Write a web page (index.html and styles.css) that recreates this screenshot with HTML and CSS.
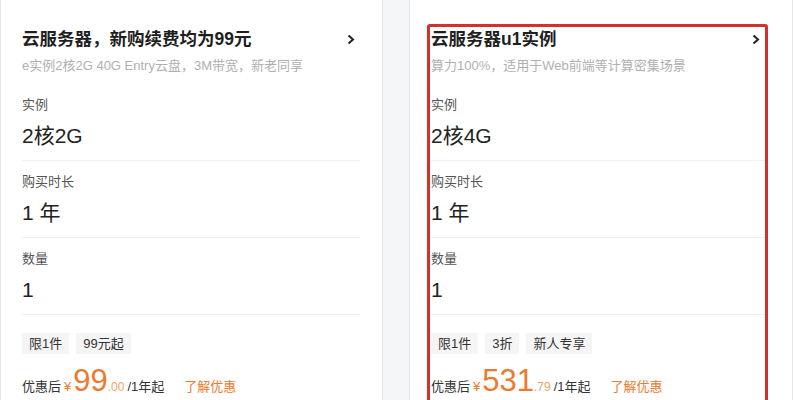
FILE: index.html
```html
<!DOCTYPE html>
<html lang="zh-CN">
<head>
    <meta charset="UTF-8">
    <meta name="viewport" content="width=device-width, initial-scale=1.0">
    <link rel="stylesheet" href="styles.css">
</head>
<body>
    <div class="cards">
        <div class="card">
            <div class="card-body">
                <div class="card-head">
                    <h2>云服务器，新购续费均为99元</h2>
                    <svg class="arrow" width="8" height="11" viewBox="0 0 8 11"><polyline points="1.5,1.5 6,5.5 1.5,9.5" fill="none" stroke="#222" stroke-width="2"/></svg>
                </div>
                <p class="desc">e实例2核2G 40G Entry云盘，3M带宽，新老同享</p>

                <div class="spec first">
                    <div class="spec-label">实例</div>
                    <div class="spec-value">2核2G</div>
                </div>
                <div class="spec">
                    <div class="spec-label">购买时长</div>
                    <div class="spec-value">1 年</div>
                </div>
                <div class="spec">
                    <div class="spec-label">数量</div>
                    <div class="spec-value">1</div>
                </div>

                <div class="tags">
                    <span class="tag">限1件</span>
                    <span class="tag">99元起</span>
                </div>
                <div class="price">
                    <span class="price-label">优惠后</span>
                    <span class="yen">¥</span><span class="num">99</span><span class="dec">.00</span>
                    <span class="unit">/1年起</span>
                    <a class="more" href="#">了解优惠</a>
                </div>
            </div>
        </div>

        <div class="card active">
            <div class="card-body">
                <div class="card-head">
                    <h2>云服务器u1实例</h2>
                    <svg class="arrow" width="8" height="11" viewBox="0 0 8 11"><polyline points="1.5,1.5 6,5.5 1.5,9.5" fill="none" stroke="#222" stroke-width="2"/></svg>
                </div>
                <p class="desc">算力100%，适用于Web前端等计算密集场景</p>

                <div class="spec first">
                    <div class="spec-label">实例</div>
                    <div class="spec-value">2核4G</div>
                </div>
                <div class="spec">
                    <div class="spec-label">购买时长</div>
                    <div class="spec-value">1 年</div>
                </div>
                <div class="spec">
                    <div class="spec-label">数量</div>
                    <div class="spec-value">1</div>
                </div>

                <div class="tags">
                    <span class="tag">限1件</span>
                    <span class="tag">3折</span>
                    <span class="tag">新人专享</span>
                </div>
                <div class="price">
                    <span class="price-label">优惠后</span>
                    <span class="yen">¥</span><span class="num">531</span><span class="dec">.79</span>
                    <span class="unit">/1年起</span>
                    <a class="more" href="#">了解优惠</a>
                </div>
            </div>
        </div>
    </div>
</body>
</html>
```

FILE: styles.css
```css
* {
    margin: 0;
    padding: 0;
    box-sizing: border-box;
}

:root {
    --orange: #ec7a2c;
    --line: #f0f0f0;
    --red: #d3302e;
}

body {
    font-family: "Liberation Sans", "Noto Sans CJK SC", sans-serif;
    background-color: #f5f6f8;
    color: #222;
    height: 400px;
    overflow: hidden;
}

.cards {
    display: flex;
    gap: 26px;
}

.card {
    width: 383px;
    height: 400px;
    overflow: hidden;
    background-color: white;
    border: 1px solid #e6e6e6;
    border-top: none;
    border-bottom: none;
    padding: 0 18px;
}

.card.active {
    width: 384px;
    padding-left: 17px;
    padding-right: 24px;
}

.card-body {
    margin-top: 24px;
    border: 3px solid transparent;
    border-radius: 3px;
    padding: 0 1px 20px 0;
}

.card.active .card-body {
    border-color: var(--red);
    padding-left: 1px;
    padding-right: 0;
}

.card-head {
    display: flex;
    align-items: center;
    justify-content: space-between;
}

.card-head h2 {
    font-size: 17.5px;
    line-height: 24px;
    font-weight: bold;
    color: #1f1f1f;
}

.arrow {
    margin-right: 5px;
}

.desc {
    margin-top: 6px;
    font-size: 13px;
    line-height: 18px;
    color: #b0b0b0;
}

.spec {
    padding-top: 12px;
    border-bottom: 1px solid var(--line);
}

.spec.first {
    padding-top: 21px;
}

.spec-label {
    font-size: 13px;
    line-height: 18px;
    color: #555;
}

.spec-value {
    margin: 8px 0 10px;
    font-size: 21px;
    line-height: 28px;
    color: #222;
}

.tags {
    display: flex;
    gap: 7px;
    margin-top: 18px;
}

.tag {
    height: 21px;
    line-height: 21px;
    padding: 0 7px;
    font-size: 13px;
    color: #333;
    background-color: #f5f5f5;
}

.price {
    display: flex;
    align-items: baseline;
    margin-top: 9px;
    font-size: 13px;
    color: #333;
}

.yen {
    margin-left: 3px;
    color: var(--orange);
}

.num {
    margin-left: 2px;
    font-size: 31px;
    line-height: 36px;
    color: var(--orange);
}

.dec {
    font-size: 12px;
    color: #f0a466;
}

.unit {
    margin-left: 3px;
}

.more {
    margin-left: 20px;
    color: var(--orange);
    text-decoration: none;
}
```
